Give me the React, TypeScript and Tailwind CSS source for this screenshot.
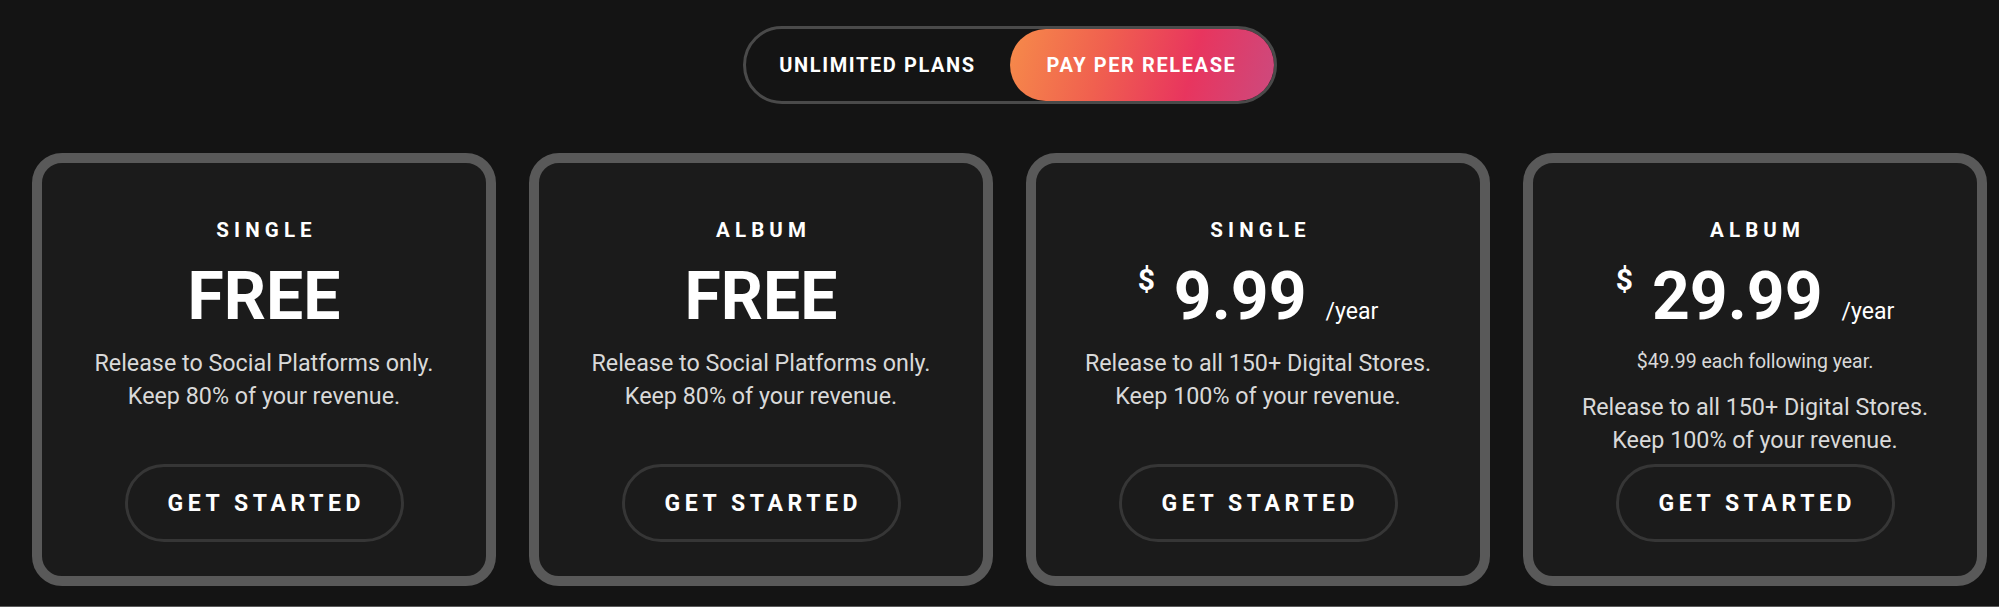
import React from "react";

type Plan = {
  title: string;
  price: string;
  dollar?: boolean;
  per?: boolean;
  note?: string;
  lines: string[];
};

const plans: Plan[] = [
  {
    title: "SINGLE",
    price: "FREE",
    lines: ["Release to Social Platforms only.", "Keep 80% of your revenue."],
  },
  {
    title: "ALBUM",
    price: "FREE",
    lines: ["Release to Social Platforms only.", "Keep 80% of your revenue."],
  },
  {
    title: "SINGLE",
    price: "9.99",
    dollar: true,
    per: true,
    lines: ["Release to all 150+ Digital Stores.", "Keep 100% of your revenue."],
  },
  {
    title: "ALBUM",
    price: "29.99",
    dollar: true,
    per: true,
    note: "$49.99 each following year.",
    lines: ["Release to all 150+ Digital Stores.", "Keep 100% of your revenue."],
  },
];

function Card({ plan }: { plan: Plan }) {
  return (
    <div className="w-[464px] h-[433px] shrink-0 rounded-[30px] border-[10px] border-[#595959] bg-[#1b1b1b] flex flex-col items-center pt-[55px] pb-[34px]">
      <div className="text-[20.5px] leading-[24px] font-bold tracking-[0.25em] pl-[0.25em] text-white">
        {plan.title}
      </div>
      <div className="mt-[19px] flex items-baseline text-white">
        {plan.dollar && (
          <span className="relative -top-[29px] text-[30px] leading-[28px] font-bold mr-[19px]">$</span>
        )}
        <span className="text-[66px] leading-[72px] font-bold">{plan.price}</span>
        {plan.per && (
          <span className="ml-[19px] text-[23px] leading-[24px] text-white">/year</span>
        )}
      </div>
      {plan.note && (
        <div className="mt-[15px] text-[19.5px] leading-[27px] text-[#d9d9d9]">{plan.note}</div>
      )}
      <div
        className={
          (plan.note ? "mt-[16px]" : "mt-[14px]") +
          " text-[23.3px] leading-[33px] text-[#d9d9d9] text-center"
        }
      >
        {plan.lines.map((l) => (
          <div key={l}>{l}</div>
        ))}
      </div>
      <button className="mt-auto w-[279px] h-[78px] rounded-full border-[3px] border-[#363636] bg-[#1b1b1b] text-white text-[23px] font-bold tracking-[0.2em] pl-[0.2em] pt-[3px] flex items-center justify-center">
        GET STARTED
      </button>
    </div>
  );
}

export default function App() {
  return (
    <div className="w-[1999px] bg-white" style={{ fontFamily: "Roboto, 'Noto Sans', sans-serif" }}>
      <div className="h-[607px] bg-[#141414] pt-[26px] border-b border-[#5a5a5a]">
        <div className="flex justify-center pl-[20px]">
          <div className="w-[534px] h-[78px] rounded-full border-[3px] border-[#4a4a4a] flex">
            <button className="w-[264px] h-[72px] rounded-full text-white text-[20px] font-bold tracking-[0.08em] flex items-center justify-center">
              UNLIMITED PLANS
            </button>
            <button className="w-[264px] h-[72px] rounded-full text-white text-[20px] font-bold tracking-[0.08em] flex items-center justify-center bg-[linear-gradient(105deg,#f68b4a_0%,#f0604f_35%,#e8355e_68%,#cc4a7e_100%)]">
              PAY PER RELEASE
            </button>
          </div>
        </div>
        <div className="mt-[49px] flex gap-[33px] pl-[32px]">
          {plans.map((p, i) => (
            <Card key={i} plan={p} />
          ))}
        </div>
      </div>
    </div>
  );
}
